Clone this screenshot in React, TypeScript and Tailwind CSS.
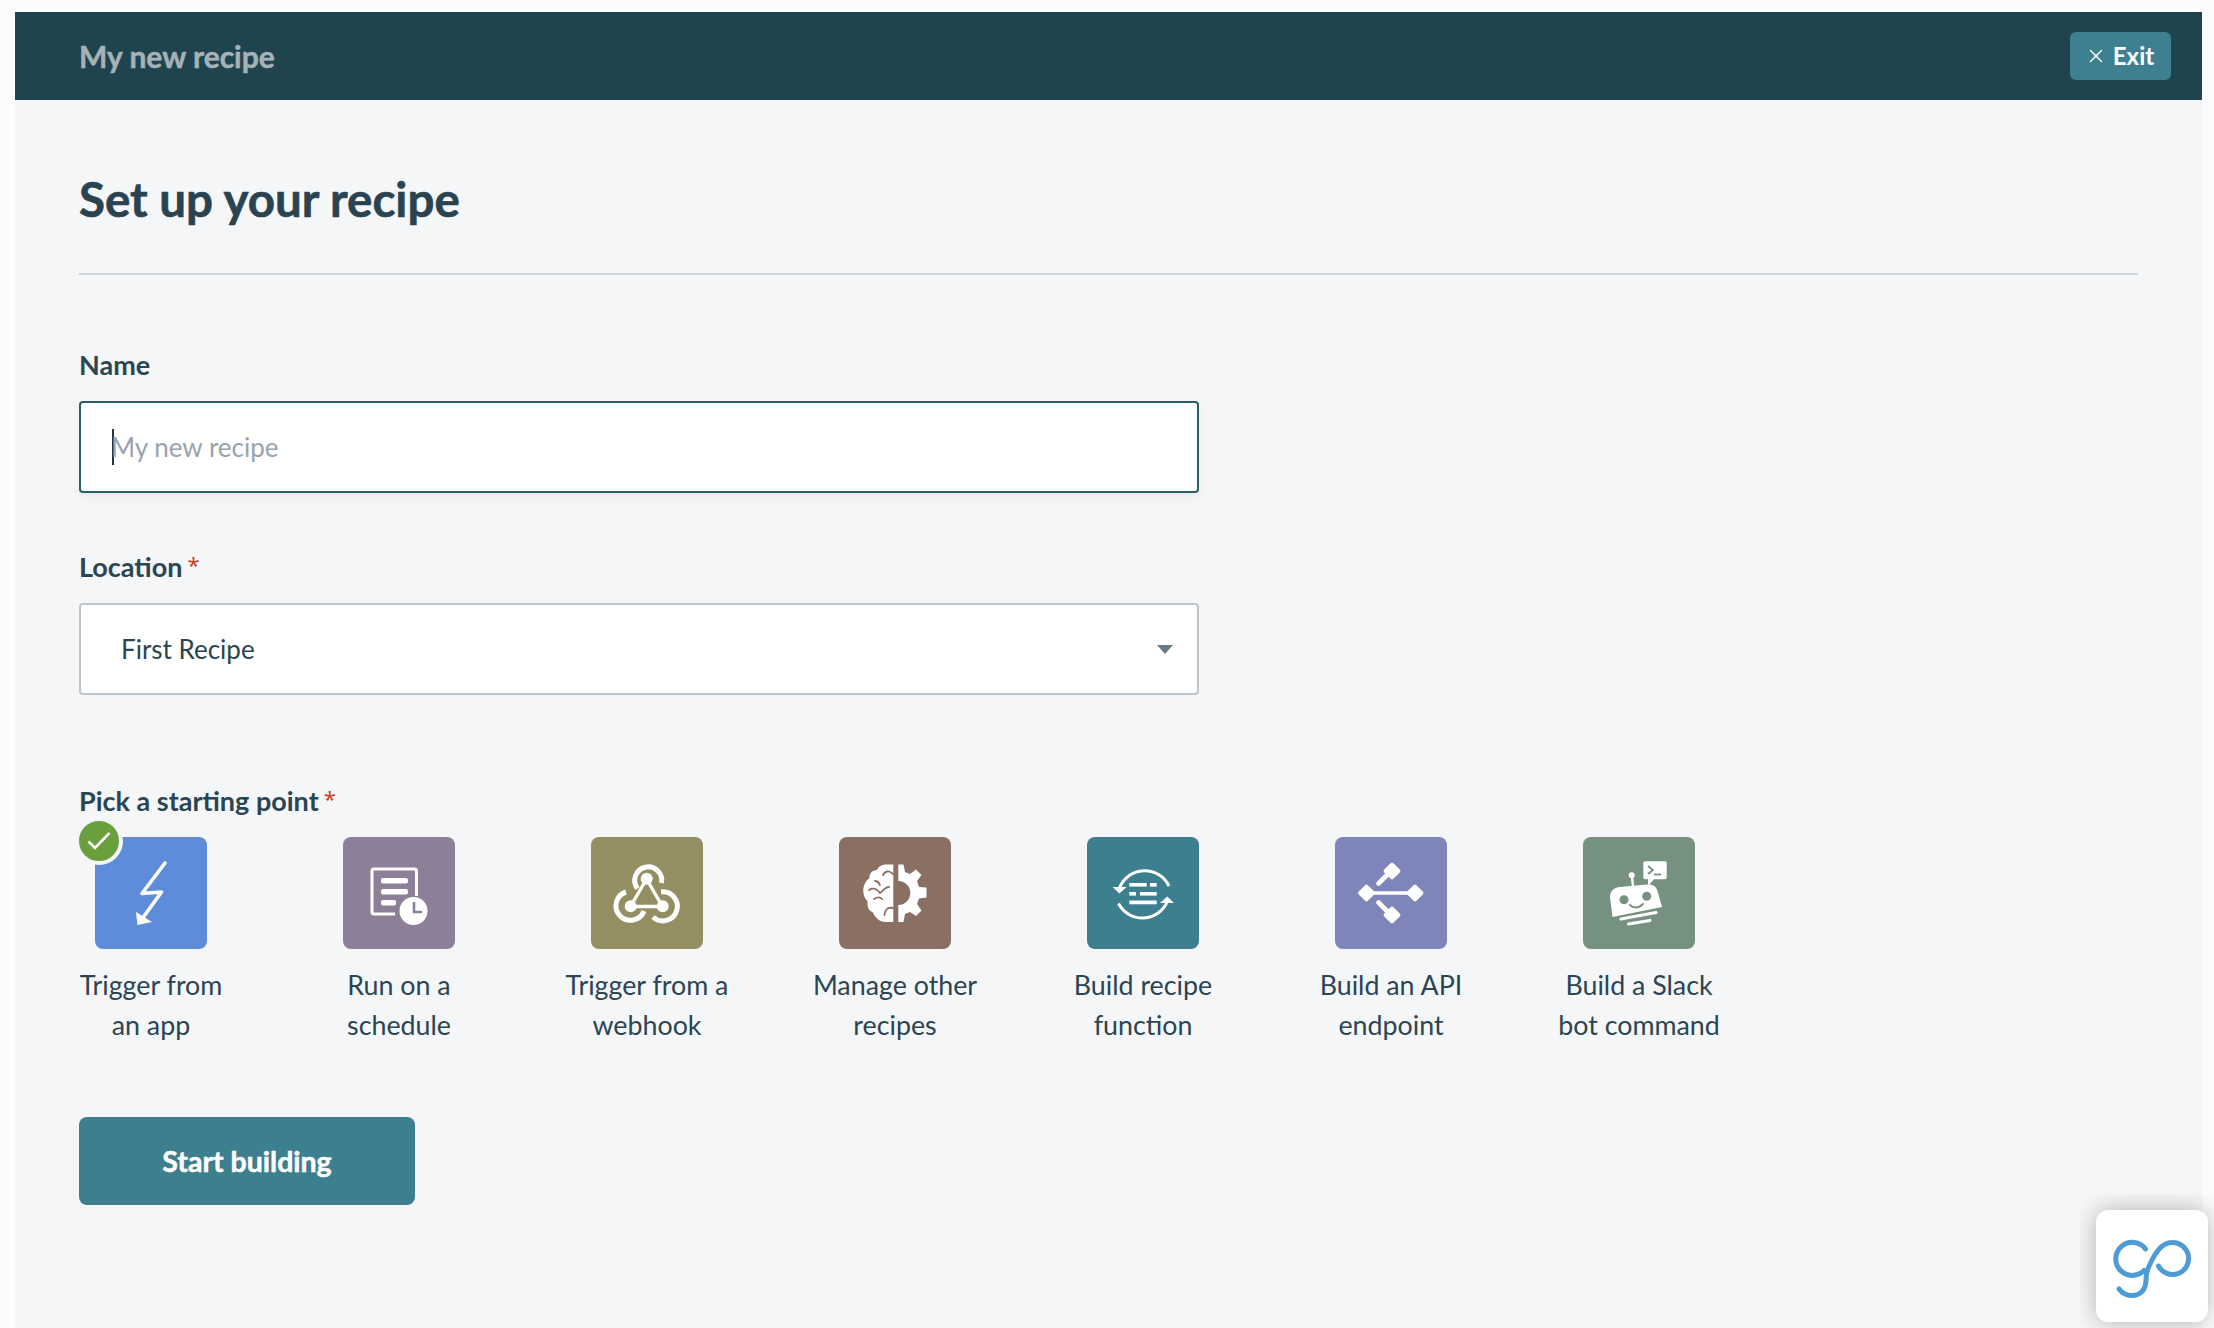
import { X } from 'lucide-react';
import type { ReactNode } from 'react';

const BoltIcon = () => (
  <svg viewBox="0 0 112 112" className="w-[112px] h-[112px]">
    <path d="M70 26 L47 56.5 L66.5 55 L47 82" fill="none" stroke="#fff" strokeWidth="3.6" strokeLinecap="round" strokeLinejoin="round" />
    <path d="M41 75 L42.5 88 L57 85 Z" fill="#fff" />
  </svg>
);

const ScheduleIcon = () => (
  <svg viewBox="0 0 112 112" className="w-[112px] h-[112px]">
    <path d="M52 77 H31 Q29 77 29 75 V34 Q29 32 31 32 H71.5 Q73.5 32 73.5 34 V59" fill="none" stroke="#fff" strokeWidth="3" />
    <rect x="38" y="41" width="27" height="5.5" rx="2" fill="#fff" />
    <rect x="38" y="52" width="27" height="5.5" rx="2" fill="#fff" />
    <rect x="38" y="63" width="15" height="5.5" rx="2" fill="#fff" />
    <circle cx="70.5" cy="74" r="14" fill="#fff" />
    <path d="M71 65 V75 H79" fill="none" stroke="#8e7f98" strokeWidth="2.6" />
  </svg>
);

const WebhookIcon = () => (
  <svg viewBox="0 0 112 112" className="w-[112px] h-[112px]">
    <g fill="none" stroke="#fff" strokeWidth="5">
      <path d="M70.5 46 A13.5 13.5 0 1 0 46.5 51.5" />
      <path d="M35 55 A14.5 14.5 0 1 0 53 74" />
      <path d="M62 80 A14.5 14.5 0 1 0 70 55" />
      <path d="M55.5 42 L39.5 69.5 H71.5 L55.5 42" strokeWidth="3.4" />
    </g>
    <circle cx="55.7" cy="41.7" r="6" fill="#fff" />
    <circle cx="39.7" cy="69.3" r="6" fill="#fff" />
    <circle cx="71.7" cy="69.3" r="6" fill="#fff" />
  </svg>
);

const BrainGearIcon = () => (
  <svg viewBox="0 0 112 112" className="w-[112px] h-[112px]">
    <path d="M54.3 27.5 L48 27.5 C42 27.5 39 30 38 33 C33 33 30 37 30.5 41 C26 44 24 50 24.3 54 C24.3 58 26 62 28.5 64 C28 70 30 74 33.5 75 C36 80 40 85 47 85 L54.3 85 Z" fill="#fff" />
    <g fill="none" stroke="#897062" strokeWidth="1.8" strokeLinecap="round">
      <path d="M54 37 C50 33 46 34 44 38" />
      <path d="M30 53 C35 50 38 52 41 56 C44 54 46 50 50 50" />
      <path d="M36 44 C38 44 40 46 41 48" />
      <path d="M35 62 C38 60 41 60 43 62" />
      <path d="M54 71 C49 70 46 72 45.5 78" />
    </g>
    <path d="M59.3 27.5 L64.5 27.5 L66 35 L71 37 L77 32.5 L82.5 38 L78 44 L80 50 L87.5 50.5 L87.5 60.5 L80 61.5 L78 67 L82.5 73.5 L77 79 L71 75 L66 77 L64.5 85 L59.3 85 L59.3 68 A12 12 0 0 0 59.3 44 Z" fill="#fff" />
  </svg>
);

const FunctionIcon = () => (
  <svg viewBox="0 0 112 112" className="w-[112px] h-[112px]">
    <g fill="none" stroke="#fff" strokeWidth="3">
      <path d="M82 49 A27 27 0 0 0 32.5 51" />
      <path d="M31.5 66.5 A27 27 0 0 0 80.5 64" />
    </g>
    <path d="M25.7 50 H39.7 L32.3 56.5 Z" fill="#fff" />
    <path d="M73 66 H87 L80.3 59.5 Z" fill="#fff" />
    <g fill="#fff">
      <rect x="42.3" y="46" width="17.4" height="3.6" />
      <rect x="63" y="46" width="6.7" height="3.6" />
      <rect x="42.3" y="55" width="6.7" height="3.6" />
      <rect x="53" y="55" width="16.7" height="3.6" />
      <rect x="42.3" y="63.5" width="27.4" height="3.8" />
    </g>
  </svg>
);

const ApiIcon = () => (
  <svg viewBox="0 0 112 112" className="w-[112px] h-[112px]">
    <g stroke="#fff" strokeWidth="3.6" strokeLinecap="round">
      <path d="M30 56 H86" />
      <path d="M43.5 46.5 L57 33" strokeWidth="4.6" />
      <path d="M43.5 65.5 L57 79" strokeWidth="4.6" />
    </g>
    <g fill="#fff">
      <rect x="25" y="49.5" width="13" height="13" rx="2" transform="rotate(45 31.5 56)" />
      <rect x="73.5" y="49.5" width="13" height="13" rx="2" transform="rotate(45 80 56)" />
      <rect x="50.5" y="27.5" width="13" height="13" rx="2" transform="rotate(45 57 34)" />
      <rect x="50.5" y="71.5" width="13" height="13" rx="2" transform="rotate(45 57 78)" />
    </g>
  </svg>
);

const BotIcon = () => (
  <svg viewBox="0 0 112 112" className="w-[112px] h-[112px]">
    <path d="M27 60 C27 54 31 50.5 37 50 L64 47.5 C70 47 73 49 74.5 54 L79 70 L29.5 80 Z" fill="#fff" />
    <circle cx="41" cy="62.7" r="4.5" fill="#76917f" />
    <circle cx="63.7" cy="59.3" r="4.5" fill="#76917f" />
    <path d="M47 68 Q53 73.5 60 67" fill="none" stroke="#76917f" strokeWidth="2" strokeLinecap="round" />
    <circle cx="48.7" cy="38.3" r="3" fill="#fff" />
    <path d="M49 40 L50 49" stroke="#fff" strokeWidth="2.4" />
    <path d="M62 24.3 H82 Q83.7 24.3 83.7 26 V40.5 Q83.7 42.3 82 42.3 L71 42.3 L65 49 L65 42.3 L62 42.3 Q60.3 42.3 60.3 40.5 V26 Q60.3 24.3 62 24.3 Z" fill="#fff" />
    <path d="M65 29 L70 33 L65 37" fill="none" stroke="#76917f" strokeWidth="1.8" />
    <path d="M71 37.5 H78" stroke="#76917f" strokeWidth="1.8" />
    <path d="M38 82 L73 75.5" stroke="#fff" strokeWidth="3" strokeLinecap="round" />
    <path d="M45.5 87 L67 83.5" stroke="#fff" strokeWidth="3" strokeLinecap="round" />
  </svg>
);

const GoLogo = () => (
  <svg viewBox="0 0 112 112" className="w-[112px] h-[112px]">
    <g fill="none" stroke="#4f9bd5" strokeWidth="5" strokeLinecap="round">
      <path d="M49.5 39 A16.5 16.5 0 1 0 48 60.5" />
      <path d="M62.5 56 A16 16 0 1 0 76 32.5 C66 32.5 60 42 56 50 C52 58 50 62 50 70 C50 80 44 85.5 36 85.5 C30 85.5 26 83 23 79" />
    </g>
  </svg>
);

const starters: { label: [string, string]; color: string; icon: ReactNode; selected?: boolean }[] = [
  { label: ['Trigger from', 'an app'], color: 'bg-[#5e8cd9]', icon: <BoltIcon />, selected: true },
  { label: ['Run on a', 'schedule'], color: 'bg-[#8e7f98]', icon: <ScheduleIcon /> },
  { label: ['Trigger from a', 'webhook'], color: 'bg-[#948f63]', icon: <WebhookIcon /> },
  { label: ['Manage other', 'recipes'], color: 'bg-[#897062]', icon: <BrainGearIcon /> },
  { label: ['Build recipe', 'function'], color: 'bg-[#3c7f8f]', icon: <FunctionIcon /> },
  { label: ['Build an API', 'endpoint'], color: 'bg-[#7d85bb]', icon: <ApiIcon /> },
  { label: ['Build a Slack', 'bot command'], color: 'bg-[#76917f]', icon: <BotIcon /> },
];

const Required = () => (
  <span className="ml-[5px] align-[4px] font-['Noto_Sans',sans-serif] text-[22px] font-normal leading-none text-[#cc3f24]">*</span>
);

export default function App() {
  return (
    <div className="relative h-[1328px] overflow-hidden bg-[#fbfcfe] pt-[12px] pl-[15px] pr-[12px] font-['Lato',sans-serif] text-[#2b4553]">
      <div className="h-[1316px] bg-[#f4f6f8]">
        <header className="flex h-[88px] items-center justify-between bg-[#1f444e] pl-[64px] pr-[31px]">
          <span className="text-[30px] font-bold text-[#a5b2b6] [-webkit-text-stroke:0.5px_#a5b2b6]">My new recipe</span>
          <button className="flex h-[48px] w-[101px] items-center justify-center gap-[6px] rounded-[6px] bg-[#3e8090] pr-[2px] text-[24px] font-bold text-white">
            <X size={22} strokeWidth={1.5} />
            Exit
          </button>
        </header>

        <main className="px-[64px]">
          <div className="flex h-[175px] items-center border-b-2 border-[#cfd4da] pt-[24px]">
            <h1 className="text-[47.5px] font-bold leading-none text-[#2a4351] [-webkit-text-stroke:0.6px_#2a4351]">Set up your recipe</h1>
          </div>

          <label className="mt-[70px] block text-[27px] font-bold leading-[40px]">Name</label>
          <div className="mt-[16px] flex h-[92px] w-[1120px] items-center rounded-[4px] border-2 border-[#2b5f68] bg-white pl-[31px] shadow-[0_4px_10px_rgba(0,0,0,0.05)]">
            <span className="h-[36px] w-[2px] bg-[#1f3540]" />
            <span className="-ml-[3px] text-[26px] text-[#97a4ad]">My new recipe</span>
          </div>

          <label className="mt-[54px] block text-[27px] font-bold leading-[40px]">
            Location<Required />
          </label>
          <div className="mt-[16px] flex h-[92px] w-[1120px] items-center justify-between rounded-[4px] border-2 border-[#bdc4cb] bg-white pl-[40px] pr-[24px]">
            <span className="text-[26px]">First Recipe</span>
            <span className="h-0 w-0 border-x-[8px] border-t-[9px] border-x-transparent border-t-[#697a87]" />
          </div>

          <label className="mt-[86px] block text-[27px] font-bold leading-[40px]">
            Pick a starting point<Required />
          </label>
          <div className="mt-[16px] flex gap-[104px]">
            {starters.map((item) => (
              <div key={item.label[0]} className="flex w-[144px] flex-col items-center">
                <div className={`relative h-[112px] w-[112px] rounded-[8px] ${item.color}`}>
                  {item.icon}
                  {item.selected && (
                    <span className="absolute left-[-20px] top-[-20px] flex h-[48px] w-[48px] items-center justify-center rounded-full border-4 border-[#f4f6f8] bg-[#6a9f3e]">
                      <svg viewBox="0 0 40 40" className="h-[40px] w-[40px]">
                        <path d="M9.5 20.5 L16 27 L30.5 12" fill="none" stroke="#fff" strokeWidth="2.6" />
                      </svg>
                    </span>
                  )}
                </div>
                <p className="mt-[16px] whitespace-nowrap text-center text-[26.8px] leading-[40px]">
                  {item.label[0]}
                  <br />
                  {item.label[1]}
                </p>
              </div>
            ))}
          </div>

          <button className="mt-[72px] h-[88px] w-[336px] rounded-[8px] bg-[#3c7f8f] text-[28.5px] font-bold text-white [-webkit-text-stroke:0.5px_#fff]">
            Start building
          </button>
        </main>
      </div>

      {/* chat widget floats over the page, its frame clips the shadow */}
      <div className="absolute left-[2080px] top-[1194px] h-[134px] w-[134px] overflow-hidden">
        <div className="ml-[16px] mt-[16px] h-[112px] w-[112px] rounded-[12px] bg-white shadow-[0_0_24px_rgba(0,0,0,0.28)]">
          <GoLogo />
        </div>
      </div>
    </div>
  );
}
